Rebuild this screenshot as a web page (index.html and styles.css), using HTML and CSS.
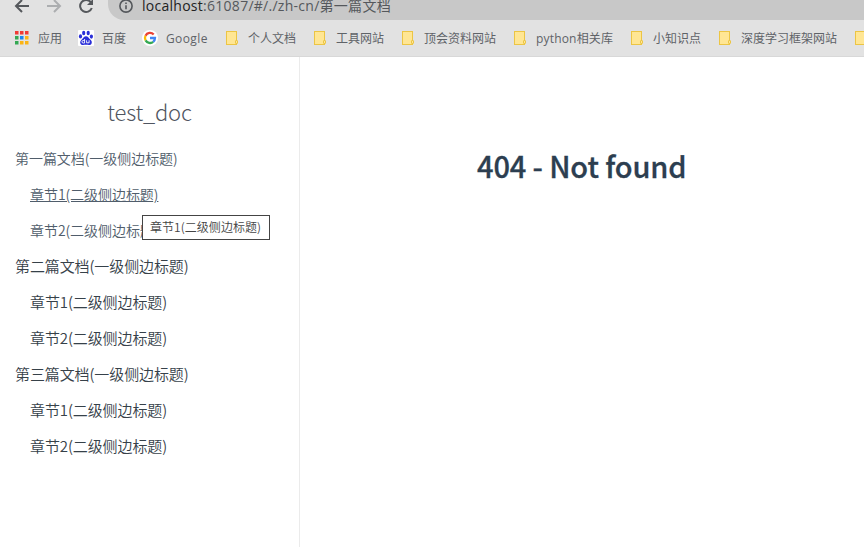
FILE: index.html
```html
<!DOCTYPE html>
<html lang="zh-CN">
<head>
<meta charset="utf-8">
<title>test_doc</title>
<link rel="stylesheet" href="styles.css">
</head>
<body>
<header class="chrome">
  <div class="toolbar">
    <div class="nav">
      <svg class="back" width="16" height="20" viewBox="0 0 16 20"><path d="M15 6H2M8 0L2 6l6 6" /></svg>
      <svg class="forward" width="16" height="20" viewBox="0 0 16 20"><path d="M1 6h13M8 0l6 6-6 6" /></svg>
      <svg class="reload" width="16" height="20" viewBox="0 0 16 20"><path d="M12.8 2.2A6 6 0 1 0 13.8 8" /><path class="tip" d="M15 -1v6H9z" /></svg>
    </div>
    <div class="address">
      <svg width="16" height="20" viewBox="0 0 16 20"><circle cx="8" cy="6" r="6.1" /><path d="M8 5.3v4M8 2.4v1.6" /></svg>
      <span class="url"><b>localhost</b>:61087/#/./zh-cn/第一篇文档</span>
    </div>
  </div>
  <nav class="bookmarks">
    <a class="mark apps"><svg width="14" height="14" viewBox="0 0 14 14"><path fill="#f03a34" d="M0 0h3.500v3.500H0zM5 0h3.500v3.500H5zM10 0h3.500v3.500H10z"/><path fill="#34a853" d="M0 5h3.500v3.500H0zM0 10h3.500v3.500H0z"/><path fill="#1a87f0" d="M5 5h3.500v3.500H5z"/><path fill="#fbb414" d="M10 5h3.500v3.500H10zM5 10h3.500v3.500H5zM10 10h3.500v3.500H10z"/></svg><span>应用</span></a>
    <a class="mark baidu"><svg width="16" height="16" viewBox="0 0 16 16"><rect width="16" height="16" rx="1" fill="#fff"/><g fill="#2a2fd8"><ellipse cx="5.7" cy="3" rx="1.6" ry="2.2"/><ellipse cx="10.2" cy="3" rx="1.6" ry="2.2"/><ellipse cx="2.5" cy="6.4" rx="1.6" ry="2.1"/><ellipse cx="13.4" cy="6.6" rx="1.6" ry="2.1"/><path d="M8 6.300c2 0 2.600 1.800 4 3 1.600 1.300 2.200 2.500 1.600 4.200-.8 2-3 1.400-5.600 1.300-2.600.1-4.800.7-5.600-1.300-.6-1.700.2-3 1.600-4.200C5.400 8.100 6 6.300 8 6.300z"/></g><path d="M6.600 9v4H5.200a1.200 1.200 0 0 1 0-2.500h1.400M8.600 10.300v2.500h2.500v-2.500" fill="none" stroke="#fff" stroke-width=".9"/></svg><span>百度</span></a>
    <a class="mark google"><svg width="16" height="16" viewBox="0 0 16 16"><circle cx="8" cy="8" r="8" fill="#fff"/><g fill="none" stroke-width="2.3"><path stroke="#ea4335" d="M3.500 5.700A5 5 0 0 1 11.700 4.600"/><path stroke="#fbbc05" d="M3.600 10.400A5 5 0 0 1 3.500 5.700"/><path stroke="#34a853" d="M11.200 11.800A5 5 0 0 1 3.600 10.400"/><path stroke="#4285f4" d="M8 8h5a5 5 0 0 1-1.800 3.800"/></g></svg><span>Google</span></a>
    <a class="mark f1"><i class="folder"></i><span>个人文档</span></a>
    <a class="mark f2"><i class="folder"></i><span>工具网站</span></a>
    <a class="mark f3"><i class="folder"></i><span>顶会资料网站</span></a>
    <a class="mark f4"><i class="folder"></i><span class="mixed">python相关库</span></a>
    <a class="mark f5"><i class="folder"></i><span>小知识点</span></a>
    <a class="mark f6"><i class="folder"></i><span>深度学习框架网站</span></a>
    <a class="mark f7"><i class="folder"></i></a>
  </nav>
</header>
<div class="page">
  <aside class="sidebar">
    <h1>test_doc</h1>
    <ul>
      <li class="link">第一篇文档(一级侧边标题)
        <ul>
          <li class="hover"><span>章节1(二级侧边标题)</span><div class="tooltip">章节1(二级侧边标题)</div></li>
          <li>章节2(二级侧边标题)</li>
        </ul>
      </li>
      <li>第二篇文档(一级侧边标题)
        <ul><li>章节1(二级侧边标题)</li><li>章节2(二级侧边标题)</li></ul>
      </li>
      <li>第三篇文档(一级侧边标题)
        <ul><li>章节1(二级侧边标题)</li><li>章节2(二级侧边标题)</li></ul>
      </li>
    </ul>
  </aside>
  <main><h2>404 - Not found</h2></main>
</div>
</body>
</html>
```
FILE: styles.css
```css
*, *::after { box-sizing: border-box; }
body { margin: 0; height: 547px; overflow: hidden; background: #fff; font-family: "Noto Sans CJK SC", sans-serif; }
.chrome { height: 57px; background: #e2e2e2; border-bottom: 1px solid #d8d8d8; }
.toolbar { display: flex; height: 20px; }
.nav { display: flex; gap: 16px; width: 108px; padding-left: 14px; }
svg { display: block; flex: none; }
.nav path { fill: none; stroke: #55585c; stroke-width: 2; }
.nav .forward path { stroke: #acaeb0; }
.nav .reload .tip { fill: #55585c; stroke: none; }
.address { display: flex; flex: 1; gap: 8px; padding-left: 10px; height: 20px; background: #c8c8c8; border-bottom-left-radius: 16px; }
.address svg { fill: none; stroke: #55585c; stroke-width: 1.6; }
.url { font: 14px/20px "Open Sans", "Noto Sans CJK SC", sans-serif; letter-spacing: 0.27px; color: #55585c; white-space: nowrap; margin-top: -4px; }
.url b { font-weight: 400; color: #222; }
.bookmarks { display: flex; height: 36px; padding-left: 15px; overflow: hidden; }
.mark { display: flex; align-items: center; flex: none; font: 12px/18px "Open Sans", "Noto Sans CJK SC", sans-serif; color: #5f6368; white-space: nowrap; }
.mark span { padding-top: 2px; }
.apps { width: 63px; gap: 9px; }
.baidu { width: 64px; gap: 8px; }
.google { width: 84px; gap: 8px; }
.google span { letter-spacing: 0.4px; }
.mixed { letter-spacing: 0.18px; }
.f1, .f2, .f5 { width: 88px; }
.f3 { width: 112px; }
.f4 { width: 117px; }
.f6 { width: 136px; }
.f7 { width: 12px; }
.folder { position: relative; flex: none; width: 11px; height: 14px; margin-right: 11px; background: #ffe694; border: 1px solid #ecc544; }
.folder::after { content: ""; position: absolute; right: -2px; bottom: 0; width: 3px; height: 4px; background: #ffe694; border: 1px solid #ecc544; border-radius: 1px; }
.page { display: flex; height: 490px; }
.sidebar { width: 300px; border-right: 1px solid #ebebeb; padding-top: 36px; color: #34495e; }
.sidebar h1 { margin: 0 0 11px; height: 36px; font-size: 22px; line-height: 36px; font-weight: 300; letter-spacing: -0.2px; text-align: center; color: #4f5560; }
.sidebar ul { margin: 0; padding: 0 0 0 15px; list-style: none; font-size: 15px; line-height: 36px; font-weight: 350; letter-spacing: -0.1px; color: #364149; }
.sidebar .link, .sidebar .link ul { font-size: 14px; letter-spacing: -0.05px; color: #505d6b; }
.hover { position: relative; }
.hover > span { text-decoration: underline; }
.sidebar .tooltip { position: absolute; left: 112px; top: 39px; width: 128px; height: 25px; background: #fff; border: 1px solid #444; font-size: 12px; letter-spacing: 0.05px; line-height: 22px; padding-left: 7px; color: #444; white-space: nowrap; }
main { flex: 1; padding: 86px 0 0 177px; }
main h2 { margin: 0; font-size: 29px; line-height: 44px; font-weight: 500; letter-spacing: -0.13px; -webkit-text-stroke: 0.3px #2c3e50; color: #2c3e50; white-space: nowrap; }
```
